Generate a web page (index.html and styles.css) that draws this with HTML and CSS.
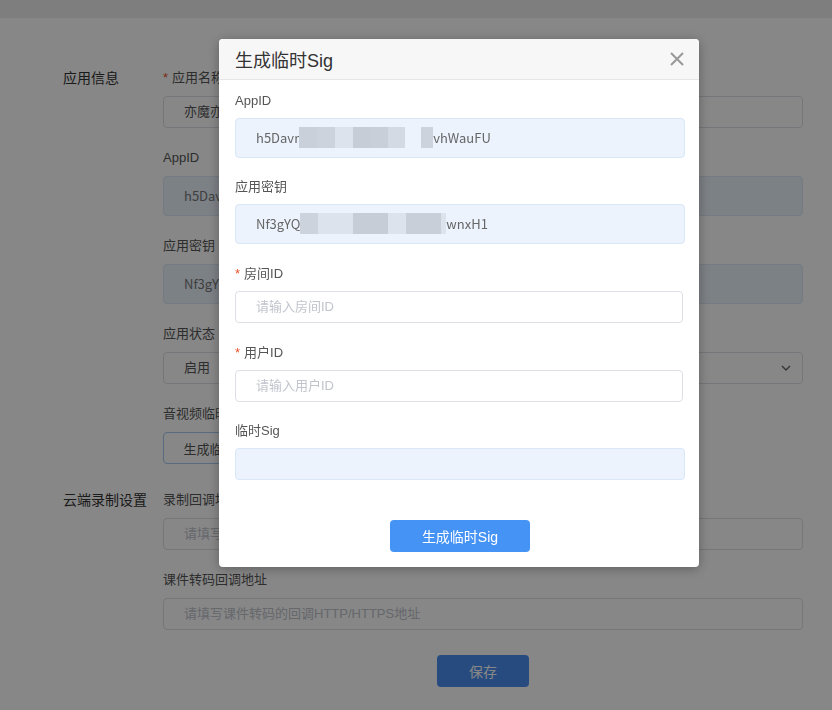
FILE: index.html
```html
<!DOCTYPE html>
<html lang="zh-CN">
<head>
  <meta charset="UTF-8" />
  <meta name="viewport" content="width=device-width, initial-scale=1.0"/>
  <title>应用设置</title>
  <link rel="stylesheet" href="styles.css">
</head>
<body>
  <div class="topbar"></div>

  <!-- Settings page (behind the dialog) -->
  <div class="page">
    <section class="group">
      <h3 class="group-title">应用信息</h3>
      <div class="group-body">
        <div class="item">
          <label class="item-label"><span class="req">*</span>应用名称</label>
          <div class="input">亦魔亦道</div>
        </div>
        <div class="item">
          <label class="item-label">AppID</label>
          <div class="input input-disabled">h5Davr••••••••••••vhWauFU</div>
        </div>
        <div class="item">
          <label class="item-label">应用密钥</label>
          <div class="input input-disabled">Nf3gYQ••••••••••••wnxH1</div>
        </div>
        <div class="item">
          <label class="item-label">应用状态</label>
          <div class="input select">
            启用
            <svg class="chevron" width="12" height="12" viewBox="0 0 12 12"><path d="M2 4l4 4 4-4" fill="none" stroke="#666" stroke-width="1.4"/></svg>
          </div>
        </div>
        <div class="item">
          <label class="item-label">音视频临时Sig</label>
          <button class="btn-plain">生成临时Sig</button>
        </div>
      </div>
    </section>

    <section class="group group-second">
      <h3 class="group-title">云端录制设置</h3>
      <div class="group-body">
        <div class="item">
          <label class="item-label">录制回调地址</label>
          <div class="input placeholder">请填写录制的回调HTTP/HTTPS地址</div>
        </div>
        <div class="item">
          <label class="item-label">课件转码回调地址</label>
          <div class="input placeholder">请填写课件转码的回调HTTP/HTTPS地址</div>
        </div>
        <div class="actions">
          <button class="btn-primary btn-save">保存</button>
        </div>
      </div>
    </section>
  </div>

  <!-- Modal -->
  <div class="mask"></div>
  <div class="dialog">
    <div class="dialog-header">
      <span class="dialog-title">生成临时Sig</span>
      <svg class="dialog-close" width="14" height="14" viewBox="0 0 14 14">
        <path d="M1 1l12 12M13 1L1 13" stroke="#999" stroke-width="2" fill="none"/>
      </svg>
    </div>
    <div class="dialog-body">
      <div class="field tight">
        <label class="field-label">AppID</label>
        <div class="field-input readonly">h5Davr<span class="blur"><i class="b1"></i><i class="b2"></i><i class="b3"></i><i class="b4"></i><i class="b5 w-17"></i><i class="b6 w-17"></i><i class="b0 w-16"></i><i class="b2 w-12"></i></span>vhWauFU</div>
      </div>
      <div class="field">
        <label class="field-label">应用密钥</label>
        <div class="field-input readonly">Nf3gYQ<span class="blur"><i class="b2"></i><i class="b3 w2"></i><i class="b4 w2"></i><i class="b3"></i><i class="b5 w2"></i><i class="b3 w-5"></i></span>wnxH1</div>
      </div>
      <div class="field">
        <label class="field-label"><span class="req">*</span>房间ID</label>
        <div class="field-input placeholder">请输入房间ID</div>
      </div>
      <div class="field tight">
        <label class="field-label"><span class="req">*</span>用户ID</label>
        <div class="field-input placeholder">请输入用户ID</div>
      </div>
      <div class="field last">
        <label class="field-label">临时Sig</label>
        <div class="field-input readonly short"></div>
      </div>
      <div class="dialog-footer">
        <button class="btn-primary btn-gen">生成临时Sig</button>
      </div>
    </div>
  </div>
</body>
</html>
```

FILE: styles.css
```css
html, body {
  overflow: hidden;
}

body {
  margin: 0;
  font-family: 'Liberation Sans', 'Noto Sans CJK SC', sans-serif;
  background-color: #fff;
  color: #333;
}

.topbar {
  height: 18px;
  background-color: #efefef;
}

/* page behind */

.page {
  padding: 50px 0 0 63px;
}

.group {
  display: flex;
}

.group-second {
  margin-top: 6px;
}

.group-title {
  width: 100px;
  margin: 0;
  font-size: 14px;
  font-weight: normal;
  line-height: 20px;
  color: #333;
}

.group-body {
  width: 640px;
}

.item {
  margin-bottom: 20px;
}

.item-label {
  display: block;
  font-size: 13px;
  line-height: 20px;
  margin-bottom: 8px;
  color: #555;
}

.req {
  color: #e5552b;
  margin-right: 4px;
}

.input {
  box-sizing: border-box;
  height: 32px;
  line-height: 30px;
  padding: 0 20px;
  border: 1px solid #dcdfe6;
  border-radius: 4px;
  font-size: 13px;
  color: #555;
  background-color: #fff;
}

.input-disabled {
  height: 40px;
  line-height: 38px;
  background-color: #ebf3fd;
  border-color: #d9e7f8;
  color: #777;
  font-family: 'Noto Sans CJK SC', sans-serif;
}

.select {
  display: flex;
  align-items: center;
  justify-content: space-between;
  padding-right: 10px;
}

.placeholder {
  color: #c0c4cc;
}

.btn-plain {
  width: 112px;
  height: 32px;
  border: 1px solid #a9c8f0;
  border-radius: 4px;
  background-color: #fff;
  font-family: inherit;
  font-size: 13px;
  color: #555;
}

.actions {
  display: flex;
  justify-content: center;
  padding-top: 5px;
}

.btn-primary {
  height: 32px;
  border: none;
  border-radius: 4px;
  background-color: #4593f5;
  color: #fff;
  font-family: inherit;
  font-size: 14px;
  cursor: pointer;
}

.btn-save {
  width: 92px;
  background-color: #4a8ff0;
}

/* modal */

.mask {
  position: fixed;
  top: 0;
  left: 0;
  right: 0;
  bottom: 0;
  background-color: rgba(0, 0, 0, 0.47);
}

.dialog {
  position: fixed;
  top: 39px;
  left: 219px;
  width: 480px;
  background-color: #fff;
  border-radius: 4px;
  box-shadow: 0 2px 12px rgba(0, 0, 0, 0.3);
  overflow: hidden;
}

.dialog-header {
  display: flex;
  align-items: center;
  justify-content: space-between;
  height: 40px;
  padding: 0 15px 0 16px;
  background-color: #f7f7f7;
  border-bottom: 1px solid #e6e6e6;
}

.dialog-title {
  font-size: 18px;
  color: #333;
}

.dialog-body {
  padding: 11px 14px 15px 16px;
}

.field {
  margin-bottom: 20px;
}

.field.tight {
  margin-bottom: 19px;
}

.field.last {
  margin-bottom: 0;
}

.field-label {
  display: block;
  font-size: 13px;
  line-height: 20px;
  margin-bottom: 7px;
  color: #555;
}

.field-input {
  box-sizing: border-box;
  width: calc(100% - 2px);
  height: 32px;
  line-height: 30px;
  padding: 0 20px;
  border: 1px solid #dcdfe6;
  border-radius: 4px;
  font-size: 13px;
  color: #666;
}

.field-input.readonly {
  width: 100%;
  height: 40px;
  line-height: 38px;
  background-color: #ecf3fd;
  border-color: #d9e7f8;
  font-family: 'Noto Sans CJK SC', sans-serif;
  white-space: nowrap;
}

.field-input.short {
  height: 32px;
}

.blur {
  display: inline-flex;
  vertical-align: middle;
  margin-top: -3px;
}

.blur i {
  display: block;
  width: 18px;
  height: 21px;
  background-color: #cdd3dc;
}

.blur i.w2 { width: 35px; }
.blur i.w-17 { width: 17px; }
.blur i.w-16 { width: 16px; }
.blur i.w-12 { width: 12px; }
.blur i.w-5 { width: 5px; }
.blur .b0 { background-color: #ecf3fd; }
.blur .b1 { background-color: #c9d0da; }
.blur .b2 { background-color: #ccd3dd; }
.blur .b3 { background-color: #dde3ec; }
.blur .b4 { background-color: #c7cdd6; }
.blur .b5 { background-color: #c9cfd8; }
.blur .b6 { background-color: #d4dae3; }

.field-input.placeholder {
  color: #c0c4cc;
}

.dialog-footer {
  display: flex;
  justify-content: center;
  margin-top: 40px;
}

.btn-gen {
  width: 140px;
}
```
